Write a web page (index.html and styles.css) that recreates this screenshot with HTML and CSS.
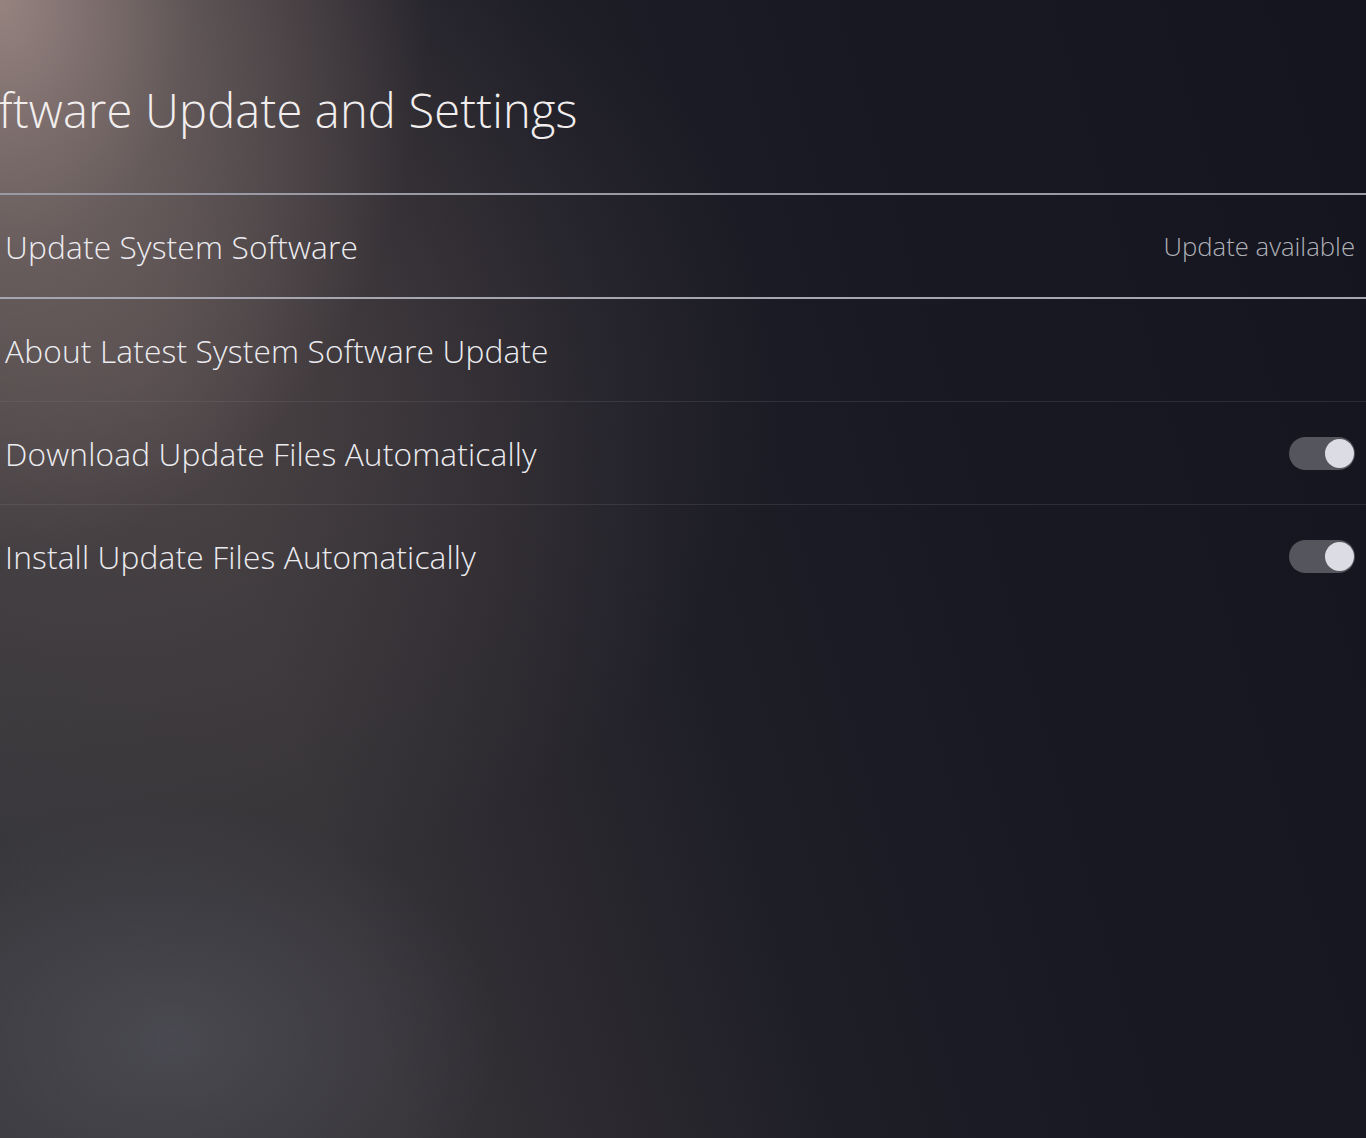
FILE: index.html
```html
<!DOCTYPE html>
<html lang="en">
<head>
    <meta charset="UTF-8">
    <meta name="viewport" content="width=device-width, initial-scale=1.0">
    <title>Software Update and Settings</title>
    <link rel="stylesheet" href="styles.css">
</head>
<body>
    <div class="screen">
        <h1 class="title">Software Update and Settings</h1>
        <div class="menu">
            <div class="menu-item selected">
                <span class="label">Update System Software</span>
                <span class="value">Update available</span>
            </div>
            <div class="menu-item">
                <span class="label">About Latest System Software Update</span>
            </div>
            <div class="menu-item">
                <span class="label">Download Update Files Automatically</span>
                <span class="toggle on"><span class="knob"></span></span>
            </div>
            <div class="menu-item last">
                <span class="label">Install Update Files Automatically</span>
                <span class="toggle on"><span class="knob"></span></span>
            </div>
        </div>
    </div>
</body>
</html>
```

FILE: styles.css
```css
html, body {
    margin: 0;
    height: 100%;
}
body {
    overflow: hidden;
    font-family: "Open Sans", "Noto Sans", sans-serif;
    color: #ececf0;
    background:
        radial-gradient(ellipse 330px 230px at 170px 1040px, rgba(100, 100, 112, .42), rgba(100, 100, 112, 0)),
        radial-gradient(ellipse 430px 560px at 0 0, rgba(185, 160, 154, .72), rgba(185, 160, 154, .3) 45%, rgba(185, 160, 154, 0)),
        radial-gradient(ellipse 640px 520px at 140px 380px, rgba(100, 86, 86, .5), rgba(100, 86, 86, .2) 55%, rgba(100, 86, 86, 0)),
        linear-gradient(74deg, #37373b 0%, #363438 24%, #2a282e 38%, #1e1e27 50%, #181923 66%, #14151f 100%);
}
.title {
    margin: 0 0 0 -55px;
    padding-top: 87px;
    height: 193px;
    box-sizing: border-box;
    font-size: 47px;
    font-weight: 300;
    line-height: 1;
    letter-spacing: .2px;
    white-space: nowrap;
    color: #f2eeee;
}
.menu-item {
    display: flex;
    align-items: center;
    justify-content: space-between;
    height: 103px;
    box-sizing: border-box;
    padding: 0 11px 0 5px;
    border-bottom: 1px solid rgba(130, 130, 140, .2);
}
.menu-item.selected {
    height: 106px;
    border-top: 2px solid #9a9aa4;
    border-bottom: 2px solid #a6a6b0;
}
.menu-item.last {
    border-bottom: none;
}
.label {
    font-size: 31.7px;
    font-weight: 300;
    letter-spacing: .15px;
    white-space: nowrap;
}
.value {
    font-size: 25.7px;
    font-weight: 300;
    color: #b0b0b7;
}
.toggle {
    display: flex;
    align-items: center;
    justify-content: flex-end;
    width: 66px;
    height: 33px;
    border-radius: 17px;
    background: #55555d;
}
.knob {
    width: 29px;
    height: 29px;
    margin-right: 1px;
    border-radius: 50%;
    background: #dcdce4;
}
```
